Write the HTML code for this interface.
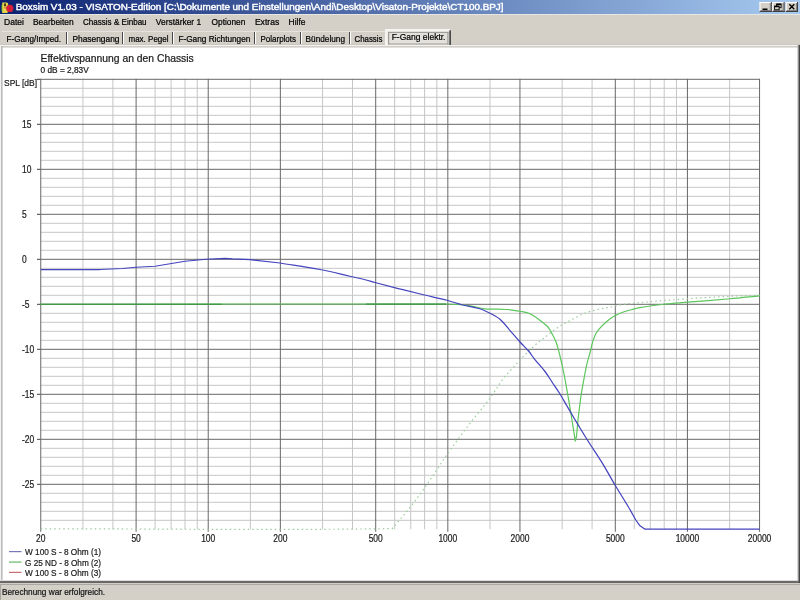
<!DOCTYPE html><html><head><meta charset="utf-8"><title>Boxsim</title><style>html,body{margin:0;padding:0;background:#D4D0C8;overflow:hidden}svg{display:block;will-change:transform}text{font-family:"Liberation Sans",sans-serif}</style></head><body>
<svg width="800" height="600" viewBox="0 0 800 600">
<defs><linearGradient id="tg" x1="0" x2="1" y1="0" y2="0"><stop offset="0" stop-color="#0C2272"/><stop offset="1" stop-color="#A6CAF0"/></linearGradient></defs>
<rect x="0" y="0" width="800" height="600" fill="#D4D0C8"/>
<rect x="0" y="0" width="800" height="14" fill="url(#tg)"/>
<rect x="0" y="14" width="800" height="1" fill="#E8E6E0"/>
<rect x="1.3" y="5" width="1.6" height="6.5" fill="#3E8A3A"/><path d="M2.2 2.6 H6.6 Q8.2 2.6 8.2 4.6 V11 Q8.2 13 6.6 13 H2.2 Z" fill="#E4D448"/><path d="M4 3.6 H6 V6.3 H4 Z" fill="#4A3A18"/><rect x="4" y="7" width="3.5" height="1.5" fill="#E09040"/><circle cx="9.8" cy="8.4" r="3.6" fill="#D41E3A"/>
<text x="15.75" y="10.1" font-size="8.8" fill="#FFFFFF" stroke="#FFFFFF" stroke-width="0.4" textLength="487.75" lengthAdjust="spacingAndGlyphs">Boxsim V1.03 - VISATON-Edition [C:\Dokumente und Einstellungen\Andi\Desktop\Visaton-Projekte\CT100.BPJ]</text>
<rect x="759.5" y="2" width="12.3" height="10" fill="#D4D0C8"/>
<rect x="759.5" y="2" width="12.3" height="1" fill="#FFFFFF"/><rect x="759.5" y="2" width="1" height="10" fill="#FFFFFF"/>
<rect x="759.5" y="11" width="12.3" height="1" fill="#404040"/><rect x="770.8" y="2" width="1" height="10" fill="#404040"/>
<rect x="760.5" y="10" width="10.3" height="1" fill="#808080"/><rect x="769.8" y="3" width="1" height="8" fill="#808080"/>
<rect x="772.3" y="2" width="12.3" height="10" fill="#D4D0C8"/>
<rect x="772.3" y="2" width="12.3" height="1" fill="#FFFFFF"/><rect x="772.3" y="2" width="1" height="10" fill="#FFFFFF"/>
<rect x="772.3" y="11" width="12.3" height="1" fill="#404040"/><rect x="783.5999999999999" y="2" width="1" height="10" fill="#404040"/>
<rect x="773.3" y="10" width="10.3" height="1" fill="#808080"/><rect x="782.5999999999999" y="3" width="1" height="8" fill="#808080"/>
<rect x="785.7" y="2" width="12.3" height="10" fill="#D4D0C8"/>
<rect x="785.7" y="2" width="12.3" height="1" fill="#FFFFFF"/><rect x="785.7" y="2" width="1" height="10" fill="#FFFFFF"/>
<rect x="785.7" y="11" width="12.3" height="1" fill="#404040"/><rect x="797.0" y="2" width="1" height="10" fill="#404040"/>
<rect x="786.7" y="10" width="10.3" height="1" fill="#808080"/><rect x="796.0" y="3" width="1" height="8" fill="#808080"/>
<rect x="762.5" y="8.5" width="5" height="1.6" fill="#000"/>
<rect x="776.6" y="3.9" width="4.5" height="3.8" fill="none" stroke="#000" stroke-width="0.9"/><rect x="776.6" y="3.9" width="4.5" height="1.2" fill="#000"/>
<rect x="774.6" y="6" width="4.5" height="3.8" fill="#D4D0C8" stroke="#000" stroke-width="0.9"/><rect x="774.6" y="6" width="4.5" height="1.2" fill="#000"/>
<path d="M789.3 4.3 L794.3 9.3 M794.3 4.3 L789.3 9.3" stroke="#000" stroke-width="1.4"/>
<text x="4" y="24.8" font-size="8.6" fill="#000" stroke="#000" stroke-width="0.22" textLength="20" lengthAdjust="spacingAndGlyphs">Datei</text>
<text x="33" y="24.8" font-size="8.6" fill="#000" stroke="#000" stroke-width="0.22" textLength="40.6" lengthAdjust="spacingAndGlyphs">Bearbeiten</text>
<text x="83" y="24.8" font-size="8.6" fill="#000" stroke="#000" stroke-width="0.22" textLength="63.6" lengthAdjust="spacingAndGlyphs">Chassis &amp; Einbau</text>
<text x="155.8" y="24.8" font-size="8.6" fill="#000" stroke="#000" stroke-width="0.22" textLength="45.4" lengthAdjust="spacingAndGlyphs">Verstärker 1</text>
<text x="211.6" y="24.8" font-size="8.6" fill="#000" stroke="#000" stroke-width="0.22" textLength="33.8" lengthAdjust="spacingAndGlyphs">Optionen</text>
<text x="254.9" y="24.8" font-size="8.6" fill="#000" stroke="#000" stroke-width="0.22" textLength="24.3" lengthAdjust="spacingAndGlyphs">Extras</text>
<text x="288.6" y="24.8" font-size="8.6" fill="#000" stroke="#000" stroke-width="0.22" textLength="16.9" lengthAdjust="spacingAndGlyphs">Hilfe</text>
<rect x="2" y="31" width="449" height="1" fill="#E6E3DD"/>
<text x="6.5" y="41.9" font-size="8.8" fill="#000" stroke="#000" stroke-width="0.22" textLength="54.5" lengthAdjust="spacingAndGlyphs">F-Gang/Imped.</text>
<text x="72.4" y="41.9" font-size="8.8" fill="#000" stroke="#000" stroke-width="0.22" textLength="47.1" lengthAdjust="spacingAndGlyphs">Phasengang</text>
<text x="128.5" y="41.9" font-size="8.8" fill="#000" stroke="#000" stroke-width="0.22" textLength="40" lengthAdjust="spacingAndGlyphs">max. Pegel</text>
<text x="178.4" y="41.9" font-size="8.8" fill="#000" stroke="#000" stroke-width="0.22" textLength="72" lengthAdjust="spacingAndGlyphs">F-Gang Richtungen</text>
<text x="260.5" y="41.9" font-size="8.8" fill="#000" stroke="#000" stroke-width="0.22" textLength="35.5" lengthAdjust="spacingAndGlyphs">Polarplots</text>
<text x="305.6" y="41.9" font-size="8.8" fill="#000" stroke="#000" stroke-width="0.22" textLength="39.4" lengthAdjust="spacingAndGlyphs">Bündelung</text>
<text x="354.5" y="41.9" font-size="8.8" fill="#000" stroke="#000" stroke-width="0.22" textLength="28" lengthAdjust="spacingAndGlyphs">Chassis</text>
<rect x="66" y="32" width="1" height="13" fill="#484848"/><rect x="67" y="32" width="1" height="13" fill="#FFFFFF"/>
<rect x="122" y="32" width="1" height="13" fill="#484848"/><rect x="123" y="32" width="1" height="13" fill="#FFFFFF"/>
<rect x="172" y="32" width="1" height="13" fill="#484848"/><rect x="173" y="32" width="1" height="13" fill="#FFFFFF"/>
<rect x="254" y="32" width="1" height="13" fill="#484848"/><rect x="255" y="32" width="1" height="13" fill="#FFFFFF"/>
<rect x="300" y="32" width="1" height="13" fill="#484848"/><rect x="301" y="32" width="1" height="13" fill="#FFFFFF"/>
<rect x="349" y="32" width="1" height="13" fill="#484848"/><rect x="350" y="32" width="1" height="13" fill="#FFFFFF"/>
<rect x="385" y="29" width="66" height="16.5" fill="#E3E1DB"/>
<rect x="385" y="29" width="65" height="2" fill="#F5F4F1"/><rect x="385" y="29" width="2.5" height="16.5" fill="#F5F4F1"/>
<rect x="388" y="32" width="60.5" height="1" fill="#A09E99"/><rect x="388" y="43.5" width="60.5" height="1" fill="#A09E99"/><rect x="388" y="32" width="1.2" height="12.5" fill="#A09E99"/><rect x="447.3" y="32" width="1.2" height="12.5" fill="#A09E99"/>
<rect x="449.3" y="30.3" width="1.7" height="15.4" fill="#4A4A4A"/>
<text x="391.7" y="40.1" font-size="8.8" fill="#000" stroke="#000" stroke-width="0.22" textLength="53.8" lengthAdjust="spacingAndGlyphs">F-Gang elektr.</text>
<rect x="0" y="45" width="800" height="538" fill="#FFFFFF"/>
<rect x="0" y="45" width="800" height="1" fill="#F4F3F0"/><rect x="1" y="46" width="797" height="1.6" fill="#D0CDC8"/><rect x="0" y="44" width="385" height="1" fill="#CAC6C0"/><rect x="451" y="44" width="349" height="1" fill="#CAC6C0"/>
<rect x="0" y="45" width="1" height="538" fill="#F4F3F0"/><rect x="1" y="46" width="1.6" height="535" fill="#BCBCBC"/>
<rect x="0" y="580" width="800" height="1" fill="#DCDCDC"/><rect x="0" y="581" width="800" height="2" fill="#6A6866"/><rect x="797.6" y="45" width="1" height="537" fill="#9A9A9A"/><rect x="798.6" y="45" width="1.4" height="538" fill="#444444"/>
<rect x="0" y="583" width="800" height="17" fill="#D4D0C8"/><rect x="0" y="583" width="800" height="1" fill="#CFCBC5"/><rect x="0" y="584" width="800" height="1" fill="#ABA7A2"/><rect x="0" y="584" width="1" height="16" fill="#A9A6A0"/>
<text x="2" y="595.4" font-size="9.8" fill="#101010" stroke="#101010" stroke-width="0.22" textLength="103" lengthAdjust="spacingAndGlyphs">Berechnung war erfolgreich.</text>
<text x="40.5" y="61.5" font-size="10.3" fill="#202020" stroke="#202020" stroke-width="0.22" textLength="153.25" lengthAdjust="spacingAndGlyphs">Effektivspannung an den Chassis</text>
<text x="40.5" y="73.2" font-size="8.6" fill="#202020" stroke="#202020" stroke-width="0.22" textLength="48.25" lengthAdjust="spacingAndGlyphs">0 dB = 2,83V</text>
<text x="4" y="86.2" font-size="9.6" fill="#202020" stroke="#202020" stroke-width="0.22" textLength="33" lengthAdjust="spacingAndGlyphs">SPL [dB]</text>
<rect x="40.75" y="519.80" width="718.80" height="1" fill="#C6C6C6"/><rect x="40.75" y="510.80" width="718.80" height="1" fill="#C6C6C6"/><rect x="40.75" y="501.80" width="718.80" height="1" fill="#C6C6C6"/><rect x="40.75" y="492.80" width="718.80" height="1" fill="#C6C6C6"/><rect x="40.75" y="474.80" width="718.80" height="1" fill="#C6C6C6"/><rect x="40.75" y="465.80" width="718.80" height="1" fill="#C6C6C6"/><rect x="40.75" y="456.80" width="718.80" height="1" fill="#C6C6C6"/><rect x="40.75" y="447.80" width="718.80" height="1" fill="#C6C6C6"/><rect x="40.75" y="429.80" width="718.80" height="1" fill="#C6C6C6"/><rect x="40.75" y="420.80" width="718.80" height="1" fill="#C6C6C6"/><rect x="40.75" y="411.80" width="718.80" height="1" fill="#C6C6C6"/><rect x="40.75" y="402.80" width="718.80" height="1" fill="#C6C6C6"/><rect x="40.75" y="384.80" width="718.80" height="1" fill="#C6C6C6"/><rect x="40.75" y="375.80" width="718.80" height="1" fill="#C6C6C6"/><rect x="40.75" y="366.80" width="718.80" height="1" fill="#C6C6C6"/><rect x="40.75" y="357.80" width="718.80" height="1" fill="#C6C6C6"/><rect x="40.75" y="339.80" width="718.80" height="1" fill="#C6C6C6"/><rect x="40.75" y="330.80" width="718.80" height="1" fill="#C6C6C6"/><rect x="40.75" y="321.80" width="718.80" height="1" fill="#C6C6C6"/><rect x="40.75" y="312.80" width="718.80" height="1" fill="#C6C6C6"/><rect x="40.75" y="294.80" width="718.80" height="1" fill="#C6C6C6"/><rect x="40.75" y="285.80" width="718.80" height="1" fill="#C6C6C6"/><rect x="40.75" y="276.80" width="718.80" height="1" fill="#C6C6C6"/><rect x="40.75" y="267.80" width="718.80" height="1" fill="#C6C6C6"/><rect x="40.75" y="249.80" width="718.80" height="1" fill="#C6C6C6"/><rect x="40.75" y="240.80" width="718.80" height="1" fill="#C6C6C6"/><rect x="40.75" y="231.80" width="718.80" height="1" fill="#C6C6C6"/><rect x="40.75" y="222.80" width="718.80" height="1" fill="#C6C6C6"/><rect x="40.75" y="204.80" width="718.80" height="1" fill="#C6C6C6"/><rect x="40.75" y="195.80" width="718.80" height="1" fill="#C6C6C6"/><rect x="40.75" y="186.80" width="718.80" height="1" fill="#C6C6C6"/><rect x="40.75" y="177.80" width="718.80" height="1" fill="#C6C6C6"/><rect x="40.75" y="159.80" width="718.80" height="1" fill="#C6C6C6"/><rect x="40.75" y="150.80" width="718.80" height="1" fill="#C6C6C6"/><rect x="40.75" y="141.80" width="718.80" height="1" fill="#C6C6C6"/><rect x="40.75" y="132.80" width="718.80" height="1" fill="#C6C6C6"/><rect x="40.75" y="114.80" width="718.80" height="1" fill="#C6C6C6"/><rect x="40.75" y="105.80" width="718.80" height="1" fill="#C6C6C6"/><rect x="40.75" y="96.80" width="718.80" height="1" fill="#C6C6C6"/><rect x="40.75" y="87.80" width="718.80" height="1" fill="#C6C6C6"/><rect x="82.44" y="78.80" width="1" height="450.50" fill="#C6C6C6"/><rect x="112.38" y="78.80" width="1" height="450.50" fill="#C6C6C6"/><rect x="154.57" y="78.80" width="1" height="450.50" fill="#C6C6C6"/><rect x="170.61" y="78.80" width="1" height="450.50" fill="#C6C6C6"/><rect x="184.50" y="78.80" width="1" height="450.50" fill="#C6C6C6"/><rect x="196.76" y="78.80" width="1" height="450.50" fill="#C6C6C6"/><rect x="249.91" y="78.80" width="1" height="450.50" fill="#C6C6C6"/><rect x="322.04" y="78.80" width="1" height="450.50" fill="#C6C6C6"/><rect x="351.98" y="78.80" width="1" height="450.50" fill="#C6C6C6"/><rect x="394.17" y="78.80" width="1" height="450.50" fill="#C6C6C6"/><rect x="410.21" y="78.80" width="1" height="450.50" fill="#C6C6C6"/><rect x="424.10" y="78.80" width="1" height="450.50" fill="#C6C6C6"/><rect x="436.36" y="78.80" width="1" height="450.50" fill="#C6C6C6"/><rect x="489.51" y="78.80" width="1" height="450.50" fill="#C6C6C6"/><rect x="561.64" y="78.80" width="1" height="450.50" fill="#C6C6C6"/><rect x="591.58" y="78.80" width="1" height="450.50" fill="#C6C6C6"/><rect x="633.77" y="78.80" width="1" height="450.50" fill="#C6C6C6"/><rect x="649.81" y="78.80" width="1" height="450.50" fill="#C6C6C6"/><rect x="663.70" y="78.80" width="1" height="450.50" fill="#C6C6C6"/><rect x="675.96" y="78.80" width="1" height="450.50" fill="#C6C6C6"/><rect x="729.11" y="78.80" width="1" height="450.50" fill="#C6C6C6"/><rect x="40.75" y="483.80" width="718.80" height="1" fill="#686868"/><rect x="37" y="483.80" width="3.75" height="1" fill="#404040"/><rect x="40.75" y="438.80" width="718.80" height="1" fill="#686868"/><rect x="37" y="438.80" width="3.75" height="1" fill="#404040"/><rect x="40.75" y="393.80" width="718.80" height="1" fill="#686868"/><rect x="37" y="393.80" width="3.75" height="1" fill="#404040"/><rect x="40.75" y="348.80" width="718.80" height="1" fill="#686868"/><rect x="37" y="348.80" width="3.75" height="1" fill="#404040"/><rect x="40.75" y="303.80" width="718.80" height="1" fill="#686868"/><rect x="37" y="303.80" width="3.75" height="1" fill="#404040"/><rect x="40.75" y="258.80" width="718.80" height="1" fill="#686868"/><rect x="37" y="258.80" width="3.75" height="1" fill="#404040"/><rect x="40.75" y="213.80" width="718.80" height="1" fill="#686868"/><rect x="37" y="213.80" width="3.75" height="1" fill="#404040"/><rect x="40.75" y="168.80" width="718.80" height="1" fill="#686868"/><rect x="37" y="168.80" width="3.75" height="1" fill="#404040"/><rect x="40.75" y="123.80" width="718.80" height="1" fill="#686868"/><rect x="37" y="123.80" width="3.75" height="1" fill="#404040"/><rect x="40.75" y="78.80" width="718.80" height="1" fill="#686868"/><rect x="37" y="78.80" width="3.75" height="1" fill="#404040"/><rect x="40.25" y="78.80" width="1" height="453.00" fill="#686868"/><rect x="135.60" y="78.80" width="1" height="453.00" fill="#686868"/><rect x="207.72" y="78.80" width="1" height="453.00" fill="#686868"/><rect x="279.85" y="78.80" width="1" height="453.00" fill="#686868"/><rect x="375.20" y="78.80" width="1" height="453.00" fill="#686868"/><rect x="447.32" y="78.80" width="1" height="453.00" fill="#686868"/><rect x="519.45" y="78.80" width="1" height="453.00" fill="#686868"/><rect x="614.80" y="78.80" width="1" height="453.00" fill="#686868"/><rect x="686.92" y="78.80" width="1" height="453.00" fill="#686868"/><rect x="759.05" y="78.80" width="1" height="453.00" fill="#686868"/>
<text x="22" y="487.6" font-size="10.2" fill="#1A1A1A" stroke="#1A1A1A" stroke-width="0.22" textLength="12.24" lengthAdjust="spacingAndGlyphs">-25</text>
<text x="22" y="442.6" font-size="10.2" fill="#1A1A1A" stroke="#1A1A1A" stroke-width="0.22" textLength="12.24" lengthAdjust="spacingAndGlyphs">-20</text>
<text x="22" y="397.6" font-size="10.2" fill="#1A1A1A" stroke="#1A1A1A" stroke-width="0.22" textLength="12.24" lengthAdjust="spacingAndGlyphs">-15</text>
<text x="22" y="352.6" font-size="10.2" fill="#1A1A1A" stroke="#1A1A1A" stroke-width="0.22" textLength="12.24" lengthAdjust="spacingAndGlyphs">-10</text>
<text x="22" y="307.6" font-size="10.2" fill="#1A1A1A" stroke="#1A1A1A" stroke-width="0.22" textLength="7.53" lengthAdjust="spacingAndGlyphs">-5</text>
<text x="22" y="262.6" font-size="10.2" fill="#1A1A1A" stroke="#1A1A1A" stroke-width="0.22" textLength="4.71" lengthAdjust="spacingAndGlyphs">0</text>
<text x="22" y="217.60000000000002" font-size="10.2" fill="#1A1A1A" stroke="#1A1A1A" stroke-width="0.22" textLength="4.71" lengthAdjust="spacingAndGlyphs">5</text>
<text x="22" y="172.60000000000002" font-size="10.2" fill="#1A1A1A" stroke="#1A1A1A" stroke-width="0.22" textLength="9.42" lengthAdjust="spacingAndGlyphs">10</text>
<text x="22" y="127.6" font-size="10.2" fill="#1A1A1A" stroke="#1A1A1A" stroke-width="0.22" textLength="9.42" lengthAdjust="spacingAndGlyphs">15</text>
<text x="40.75" y="542.2" font-size="10.2" fill="#1A1A1A" stroke="#1A1A1A" stroke-width="0.22" textLength="9.42" lengthAdjust="spacingAndGlyphs" font-weight="normal" text-anchor="middle">20</text>
<text x="136.1" y="542.2" font-size="10.2" fill="#1A1A1A" stroke="#1A1A1A" stroke-width="0.22" textLength="9.42" lengthAdjust="spacingAndGlyphs" font-weight="normal" text-anchor="middle">50</text>
<text x="208.22" y="542.2" font-size="10.2" fill="#1A1A1A" stroke="#1A1A1A" stroke-width="0.22" textLength="14.13" lengthAdjust="spacingAndGlyphs" font-weight="normal" text-anchor="middle">100</text>
<text x="280.35" y="542.2" font-size="10.2" fill="#1A1A1A" stroke="#1A1A1A" stroke-width="0.22" textLength="14.13" lengthAdjust="spacingAndGlyphs" font-weight="normal" text-anchor="middle">200</text>
<text x="375.7" y="542.2" font-size="10.2" fill="#1A1A1A" stroke="#1A1A1A" stroke-width="0.22" textLength="14.13" lengthAdjust="spacingAndGlyphs" font-weight="normal" text-anchor="middle">500</text>
<text x="447.82" y="542.2" font-size="10.2" fill="#1A1A1A" stroke="#1A1A1A" stroke-width="0.22" textLength="18.83" lengthAdjust="spacingAndGlyphs" font-weight="normal" text-anchor="middle">1000</text>
<text x="519.95" y="542.2" font-size="10.2" fill="#1A1A1A" stroke="#1A1A1A" stroke-width="0.22" textLength="18.83" lengthAdjust="spacingAndGlyphs" font-weight="normal" text-anchor="middle">2000</text>
<text x="615.3" y="542.2" font-size="10.2" fill="#1A1A1A" stroke="#1A1A1A" stroke-width="0.22" textLength="18.83" lengthAdjust="spacingAndGlyphs" font-weight="normal" text-anchor="middle">5000</text>
<text x="687.42" y="542.2" font-size="10.2" fill="#1A1A1A" stroke="#1A1A1A" stroke-width="0.22" textLength="23.54" lengthAdjust="spacingAndGlyphs" font-weight="normal" text-anchor="middle">10000</text>
<text x="759.55" y="542.2" font-size="10.2" fill="#1A1A1A" stroke="#1A1A1A" stroke-width="0.22" textLength="23.54" lengthAdjust="spacingAndGlyphs" font-weight="normal" text-anchor="middle">20000</text>
<path d="M40.75 528.80 C157.73 528.73 274.73 530.41 391.70 528.60 C394.13 528.56 395.12 525.15 396.70 523.30 C402.33 516.71 408.02 510.17 413.30 503.30 C419.13 495.73 424.57 487.86 430.00 480.00 C435.70 471.76 440.92 463.19 446.70 455.00 C454.26 444.28 462.04 433.72 470.00 423.30 C476.48 414.82 483.62 406.86 490.00 398.30 C494.63 392.08 498.30 385.17 503.00 379.00 C506.65 374.21 510.96 369.97 515.00 365.50 C517.96 362.22 520.87 358.88 524.00 355.75 C528.38 351.37 532.86 347.10 537.50 343.00 C539.37 341.34 541.51 340.02 543.50 338.50 C548.51 334.68 553.25 330.48 558.50 327.00 C562.94 324.05 567.78 321.74 572.50 319.25 C576.45 317.16 580.32 314.85 584.50 313.25 C588.86 311.58 593.45 310.57 598.00 309.50 C601.96 308.57 606.02 308.08 610.00 307.25 C614.02 306.41 617.93 305.04 622.00 304.50 C632.96 303.04 643.99 302.22 655.00 301.25 C665.82 300.30 676.66 299.47 687.50 298.75 C701.66 297.81 715.82 296.89 730.00 296.25 C739.83 295.81 749.67 295.75 759.50 295.50" fill="none" stroke="#9CCC9C" stroke-width="1.2" stroke-dasharray="1.5,3"/>
<path d="M40.75 304.40 C176.33 304.27 311.92 303.56 447.50 304.00 C455.02 304.02 462.54 304.84 470.00 305.80 C475.06 306.45 479.93 308.30 485.00 308.80 C492.47 309.54 500.02 308.94 507.50 309.50 C512.04 309.84 516.53 310.66 521.00 311.50 C524.04 312.07 527.15 312.54 530.00 313.75 C532.72 314.91 535.10 316.77 537.50 318.50 C540.77 320.86 544.03 323.27 547.00 326.00 C548.23 327.13 549.18 328.55 550.00 330.00 C552.19 333.90 554.39 337.83 556.00 342.00 C557.74 346.53 558.82 351.29 560.00 356.00 C561.49 361.96 562.79 367.97 564.00 374.00 C565.46 381.31 566.72 388.66 568.00 396.00 C569.39 403.99 570.71 411.99 572.00 420.00 C573.14 427.09 574.20 434.20 575.30 441.30 M575.30 441.30 C575.70 439.53 576.27 437.80 576.50 436.00 C577.17 430.69 577.40 425.32 578.00 420.00 C578.90 411.99 579.85 403.98 581.00 396.00 C581.77 390.64 582.78 385.32 583.75 380.00 C584.68 374.92 585.54 369.83 586.70 364.80 C587.69 360.49 589.08 356.28 590.20 352.00 C591.01 348.91 591.59 345.76 592.50 342.70 C593.33 339.92 594.10 337.09 595.40 334.50 C596.46 332.38 597.95 330.49 599.50 328.70 C601.66 326.21 603.98 323.84 606.50 321.70 C609.07 319.52 611.77 317.46 614.70 315.80 C617.64 314.13 620.82 312.91 624.00 311.75 C626.60 310.80 629.32 310.20 632.00 309.50 C634.65 308.81 637.30 308.05 640.00 307.60 C648.30 306.22 656.63 304.94 665.00 304.00 C672.64 303.14 680.33 302.82 688.00 302.20 C702.00 301.07 716.01 300.00 730.00 298.75 C739.84 297.87 749.67 296.78 759.50 295.80" fill="none" stroke="#5CC65C" stroke-width="1.2" stroke-linejoin="miter"/>
<rect x="40.75" y="303.7" width="181" height="1.3" fill="#44984A"/><rect x="366" y="303.5" width="80" height="1.3" fill="#44984A"/>
<path d="M40.75 269.50 L100.00 269.50 L122.50 268.50 L136.25 267.25 L155.00 266.25 L170.00 263.75 L185.00 261.25 L206.25 259.25 L225.00 258.40 L232.50 258.90 L250.00 259.60 L280.00 263.00 M280.00 263.00 C293.33 265.17 306.73 266.99 320.00 269.50 C330.07 271.41 340.01 273.97 350.00 276.25 C355.34 277.47 360.69 278.67 366.00 280.00 C369.02 280.76 371.99 281.70 375.00 282.50 C383.32 284.70 391.65 286.89 400.00 289.00 C408.15 291.06 416.32 293.04 424.50 295.00 C431.99 296.79 439.55 298.31 447.00 300.25 C452.05 301.56 456.95 303.45 462.00 304.75 C467.62 306.20 473.46 306.78 479.00 308.50 C483.17 309.79 487.12 311.75 491.00 313.75 C494.13 315.36 497.37 316.96 500.00 319.30 C504.00 322.86 507.16 327.28 510.70 331.30 C513.82 334.85 516.83 338.49 520.00 342.00 C522.77 345.06 525.83 347.86 528.50 351.00 C530.74 353.63 532.53 356.61 534.70 359.30 C538.04 363.45 541.77 367.27 545.00 371.50 C547.55 374.85 549.67 378.50 552.00 382.00 C554.67 386.00 557.45 389.92 560.00 394.00 C562.45 397.93 564.67 402.00 567.00 406.00 C569.33 410.00 571.64 414.01 574.00 418.00 C575.98 421.35 577.98 424.68 580.00 428.00 C582.65 432.35 585.27 436.71 588.00 441.00 C592.77 448.48 597.86 455.74 602.50 463.30 C606.87 470.41 610.73 477.82 615.00 485.00 C619.34 492.29 623.97 499.41 628.30 506.70 C630.90 511.08 633.30 515.57 635.80 520.00 M635.80 520.00 L640.00 525.80 L645.00 529.20 L655.00 529.20 L759.50 529.20" fill="none" stroke="#4444BE" stroke-width="1.25" stroke-linejoin="round"/>
<rect x="9" y="551" width="12.5" height="1.2" fill="#7878B8"/>
<rect x="9" y="561.5" width="12.5" height="1.2" fill="#68B868"/>
<rect x="9" y="571.8" width="12.5" height="1.2" fill="#C87070"/>
<text x="25" y="555.3" font-size="9.5" fill="#202020" stroke="#202020" stroke-width="0.22" textLength="76" lengthAdjust="spacingAndGlyphs">W 100 S - 8 Ohm (1)</text>
<text x="25" y="565.6" font-size="9.5" fill="#202020" stroke="#202020" stroke-width="0.22" textLength="76" lengthAdjust="spacingAndGlyphs">G 25 ND - 8 Ohm (2)</text>
<text x="25" y="575.9" font-size="9.5" fill="#202020" stroke="#202020" stroke-width="0.22" textLength="76" lengthAdjust="spacingAndGlyphs">W 100 S - 8 Ohm (3)</text>
</svg></body></html>
